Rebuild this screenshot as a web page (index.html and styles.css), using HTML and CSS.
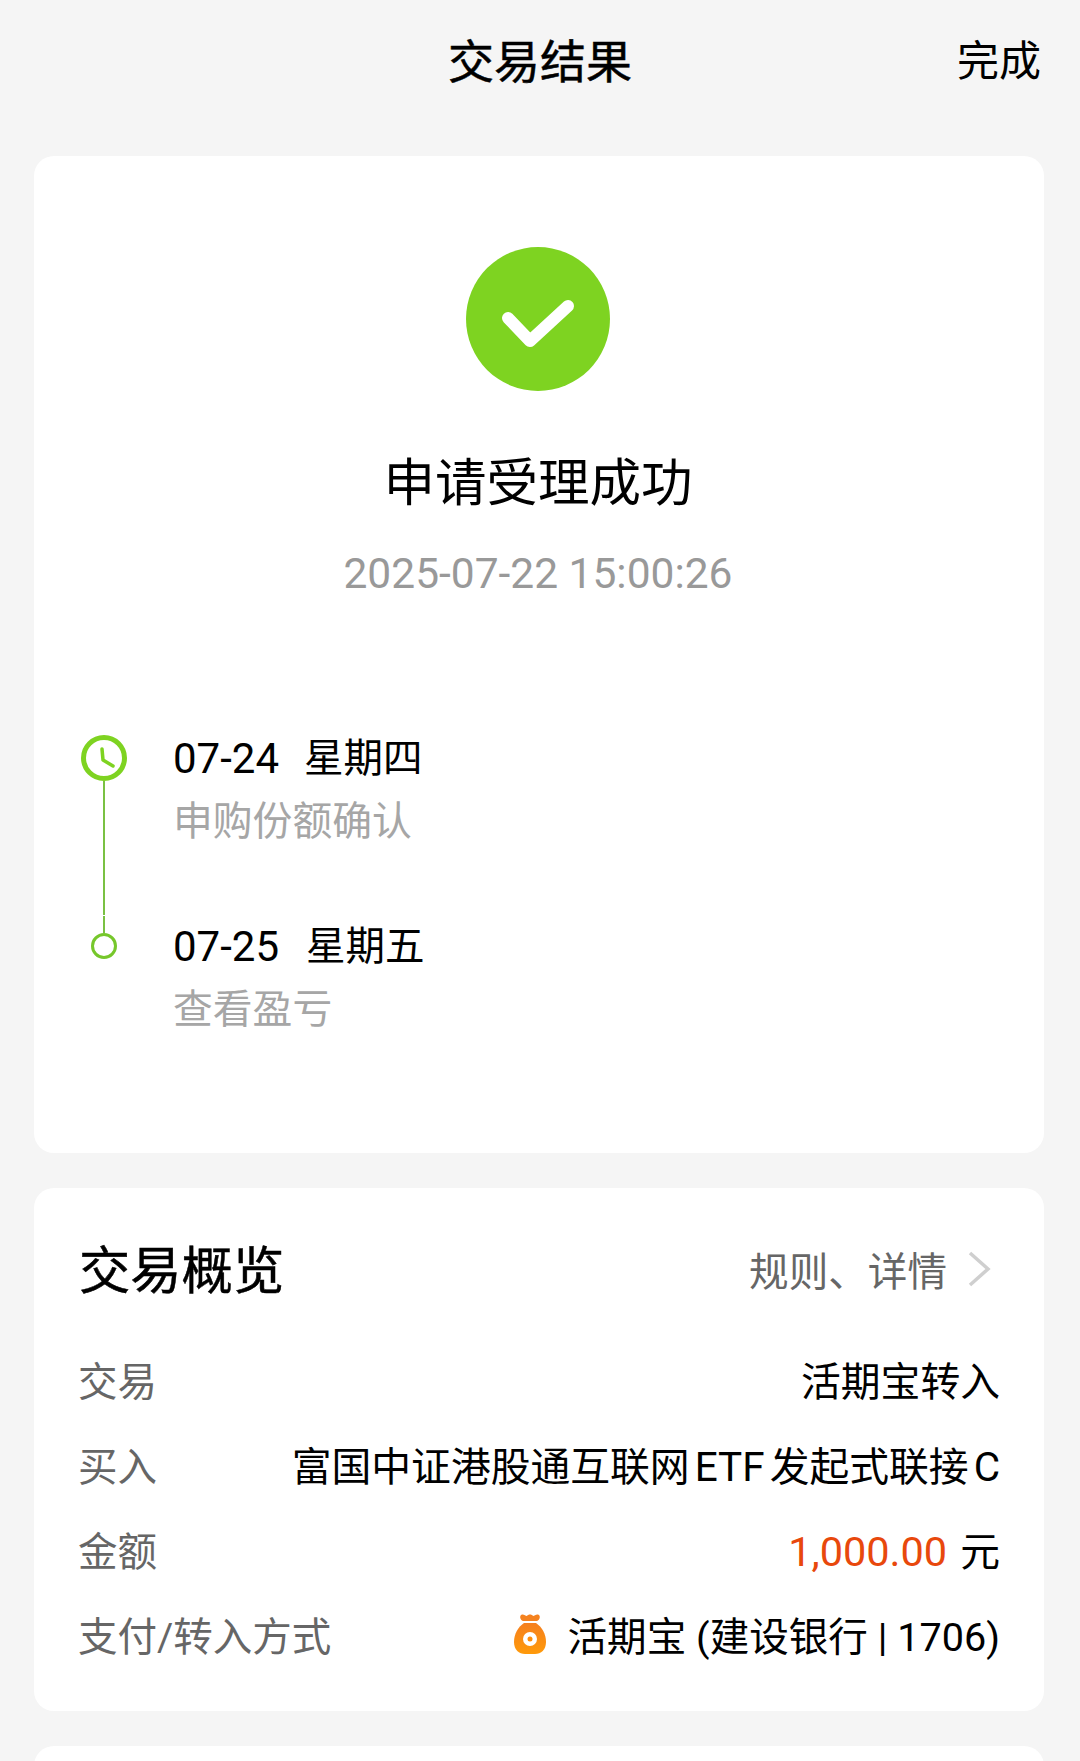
FILE: index.html
```html
<!DOCTYPE html>
<html lang="zh-CN">
<head>
    <meta charset="UTF-8">
    <meta name="viewport" content="width=device-width, initial-scale=1.0">
    <title>交易结果</title>
    <link rel="stylesheet" href="styles.css">
</head>
<body>
    <header class="topbar">
        <h1 class="topbar-title">交易结果</h1>
        <span class="topbar-done">完成</span>
    </header>

    <section class="card result">
        <svg class="result-icon" viewBox="0 0 144 144">
            <circle cx="72" cy="72" r="72" fill="#7ed321"/>
            <path d="M42 71 L64 94 L102 59" fill="none" stroke="#fff" stroke-width="12" stroke-linecap="round" stroke-linejoin="round"/>
        </svg>
        <h2 class="result-title">申请受理成功</h2>
        <p class="result-time">2025-07-22 15:00:26</p>

        <div class="timeline">
            <div class="step">
                <div class="step-marker">
                    <svg class="step-clock" viewBox="0 0 46 46">
                        <circle cx="23" cy="23" r="20.500" fill="none" stroke="#7ed321" stroke-width="5"/>
                        <path d="M21 14 L22 25 L32 31" fill="none" stroke="#7ed321" stroke-width="3.500" stroke-linecap="round" stroke-linejoin="round"/>
                    </svg>
                    <div class="step-line"></div>
                </div>
                <div class="step-body step-body-first">
                    <div class="step-date"><span class="step-day">07-24</span><span>星期四</span></div>
                    <div class="step-note">申购份额确认</div>
                </div>
            </div>
            <div class="step">
                <div class="step-marker">
                    <div class="step-stem"></div>
                    <div class="step-dot"></div>
                </div>
                <div class="step-body">
                    <div class="step-date"><span class="step-day">07-25</span><span>星期五</span></div>
                    <div class="step-note">查看盈亏</div>
                </div>
            </div>
        </div>
    </section>

    <section class="card overview">
        <div class="overview-head">
            <h2 class="overview-title">交易概览</h2>
            <div class="overview-link">
                <span>规则、详情</span>
                <svg class="chevron" viewBox="0 0 24 38">
                    <path d="M3 3 L21 19 L3 35" fill="none" stroke="#cfcfcf" stroke-width="3.5"/>
                </svg>
            </div>
        </div>
        <div class="row">
            <span class="row-label">交易</span>
            <span class="row-value">活期宝转入</span>
        </div>
        <div class="row">
            <span class="row-label">买入</span>
            <span class="row-value">富国中证港股通互联网<span class="latin">ETF</span>发起式联接<span class="latin">C</span></span>
        </div>
        <div class="row">
            <span class="row-label">金额</span>
            <span class="row-value"><span class="amount">1,000.00</span>元</span>
        </div>
        <div class="row">
            <span class="row-label">支付/转入方式</span>
            <span class="row-value row-pay">
                <svg class="bag" viewBox="0 0 34 42">
                    <defs>
                        <linearGradient id="bag-fill" x1="0" y1="0" x2="0" y2="1">
                            <stop offset="0" stop-color="#f57f1e"/>
                            <stop offset="1" stop-color="#ff9a0a"/>
                        </linearGradient>
                    </defs>
                    <path d="M9 1.500 C11 1 12.500 3 14 3 C15 1 19 1 20 3 C21.500 3 23 1 25 1.500 C28 2.500 27 7 24 8 L10 8 C7 7 6 2.500 9 1.500 Z" fill="#f5821f"/>
                    <path d="M11 10 L23 10 C29 14 33 21 33 29 C33 37 28 41 22 41 L12 41 C6 41 1 37 1 29 C1 21 5 14 11 10 Z" fill="url(#bag-fill)"/>
                    <circle cx="17" cy="26" r="7" fill="#fff"/>
                    <circle cx="17" cy="26" r="2.500" fill="#ff8c0a"/>
                </svg>
                <span>活期宝 (建设银行 | 1706)</span>
            </span>
        </div>
    </section>

    <section class="card card-next"></section>
</body>
</html>
```

FILE: styles.css
```css
* {
    box-sizing: border-box;
}

html, body {
    height: 1761px;
    overflow: hidden;
}

body {
    margin: 0;
    background-color: #f5f5f5;
    color: #000;
    font-family: Roboto, "Noto Sans CJK SC", sans-serif;
}

h1, h2, p {
    margin: 0;
    font-weight: 400;
}

.topbar {
    height: 156px;
    padding: 27px 39px 0;
    position: relative;
    display: flex;
    justify-content: flex-end;
}

.topbar-title {
    position: absolute;
    left: 0;
    right: 0;
    top: 27px;
    text-align: center;
    font-size: 46px;
    line-height: 70px;
    -webkit-text-stroke: 0.5px #000;
}

.topbar-done {
    font-size: 42px;
    line-height: 70px;
}

.card {
    margin: 0 36px 0 34px;
    background-color: #fff;
    border-radius: 20px;
}

.result {
    height: 997px;
    padding: 91px 47px 0 45px;
    display: flex;
    flex-direction: column;
}

.result-icon {
    width: 144px;
    height: 144px;
    align-self: center;
}

.result-title {
    margin-top: 58px;
    text-align: center;
    font-size: 51.500px;
    line-height: 70px;
}

.result-time {
    margin-top: 25px;
    text-align: center;
    font-size: 42.500px;
    line-height: 60px;
    color: #999;
}

.timeline {
    margin-top: 123px;
}

.step {
    display: flex;
}

.step-marker {
    width: 49px;
    margin-right: 45px;
    display: flex;
    flex-direction: column;
    align-items: center;
}

.step-clock {
    width: 46px;
    height: 46px;
    margin-top: 8px;
    flex-shrink: 0;
}

.step-line {
    flex: 1;
    width: 2px;
    background-color: #7ac143;
}

.step-stem {
    width: 2px;
    height: 17px;
    margin-top: 1px;
    background-color: #7ac143;
}

.step-dot {
    width: 26px;
    height: 26px;
    border: 3px solid #76c72b;
    border-radius: 50%;
}

.step-body-first {
    padding-bottom: 62px;
}

.step-date {
    display: flex;
    gap: 25px;
    font-size: 39.500px;
    line-height: 63px;
}

.step:last-child .step-date {
    gap: 27px;
}

.step-day {
    font-size: 42px;
}

.step-note {
    font-size: 39.800px;
    line-height: 63px;
    color: #a6a6a6;
}

.overview {
    height: 523px;
    margin-top: 35px;
    padding: 43px 44px 0 45px;
}

.overview-head {
    height: 74px;
    margin-bottom: 31px;
    display: flex;
    justify-content: space-between;
    align-items: center;
}

.overview-title {
    margin-top: 8px;
    font-size: 51.300px;
    line-height: 74px;
    -webkit-text-stroke: 0.5px #000;
}

.overview-link {
    display: flex;
    align-items: center;
    gap: 20px;
    font-size: 39.600px;
    color: #666;
}

.chevron {
    width: 24px;
    height: 38px;
    margin: 2px 9px 0 0;
}

.row {
    height: 85px;
    display: flex;
    justify-content: space-between;
    align-items: center;
    font-size: 39.800px;
}

.row-label {
    margin-left: -1px;
    font-size: 39.500px;
    color: #666;
}

.latin {
    margin: 0 5px;
    font-size: 40.500px;
}

.latin:last-child {
    margin-right: 0;
}

.amount {
    margin-right: 13px;
    font-size: 41.500px;
    color: #e8480c;
}

.row-pay {
    display: flex;
    align-items: center;
    gap: 21px;
    font-size: 39.600px;
}

.bag {
    width: 34px;
    height: 42px;
}

.card-next {
    height: 100px;
    margin-top: 35px;
}
```
